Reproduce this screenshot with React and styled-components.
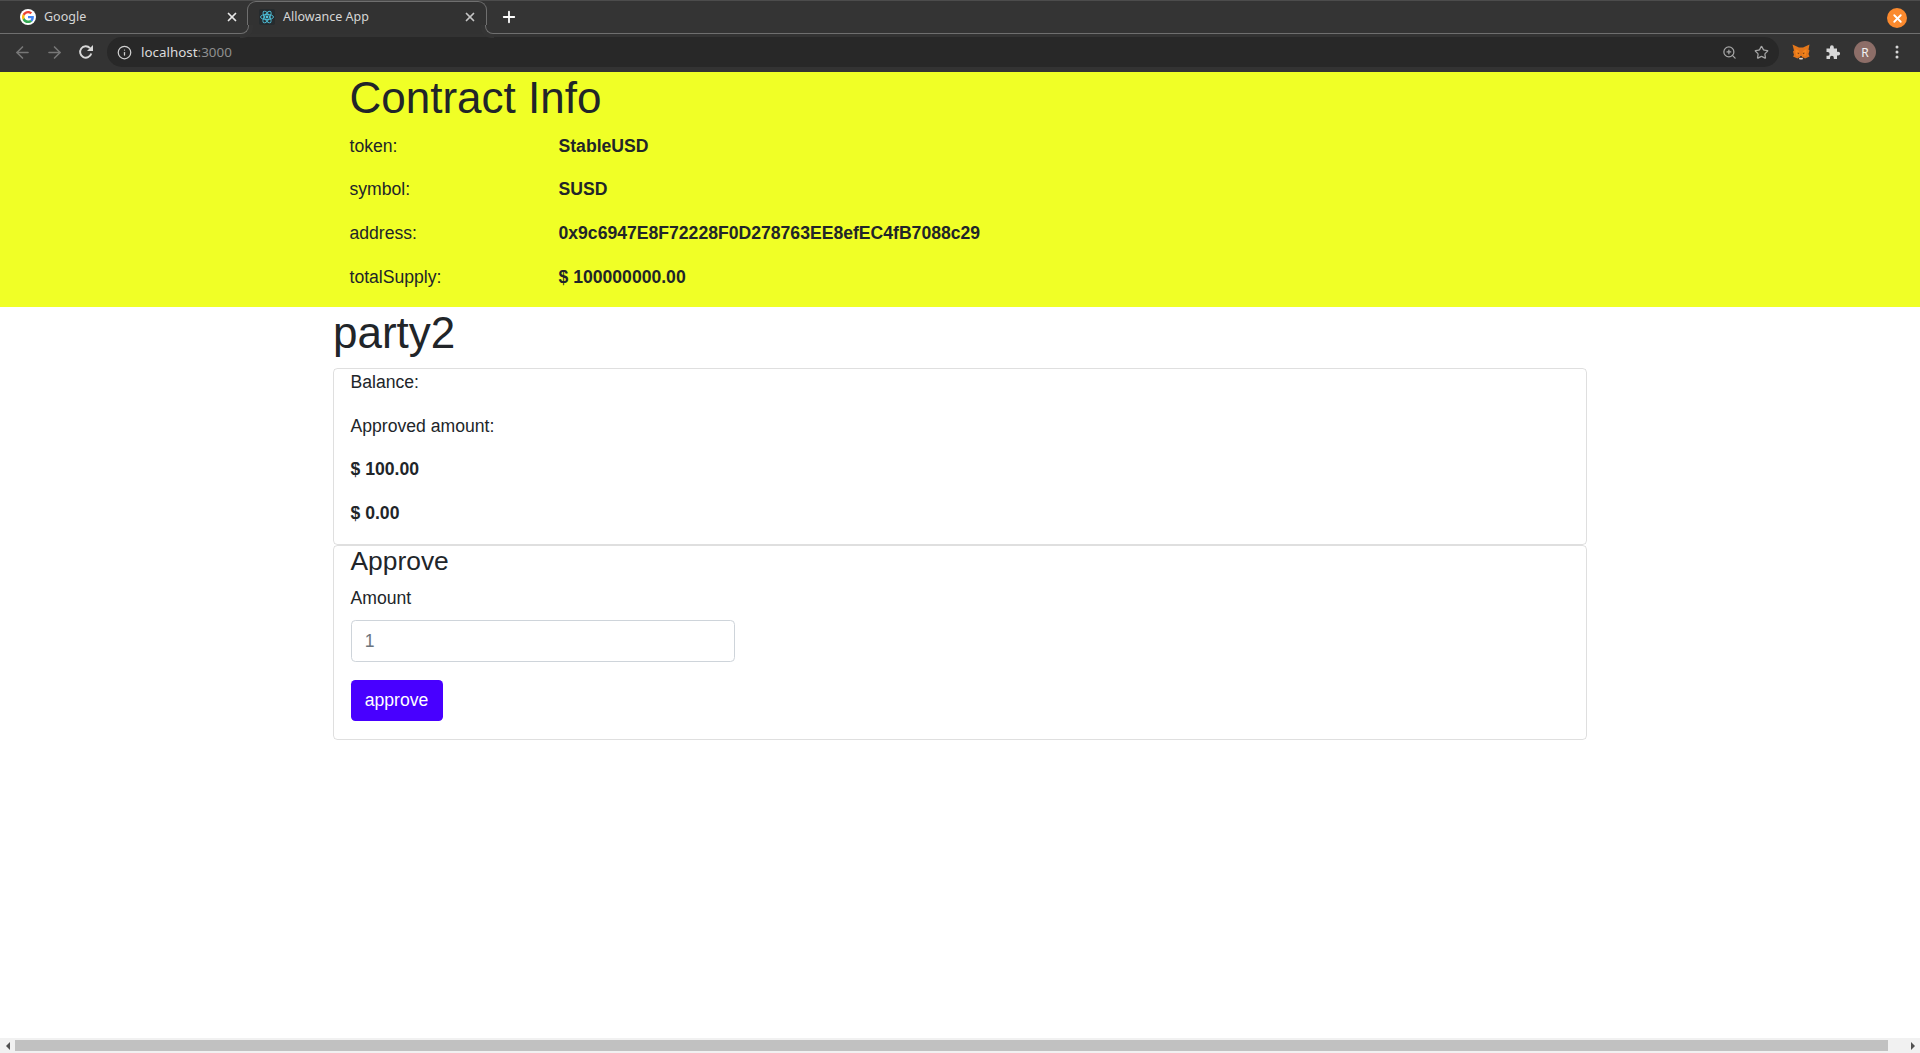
import React from "react";
import styled, { createGlobalStyle } from "styled-components";
import { ArrowLeft, ArrowRight, Info, Star, ZoomIn, X, Plus } from "lucide-react";

const GlobalStyle = createGlobalStyle`
  html, body {
    margin: 0;
    height: 100%;
    overflow: hidden;
    background: #fff;
  }
  * {
    box-sizing: border-box;
  }
`;

const Shell = styled.div`
  height: 100vh;
  display: flex;
  flex-direction: column;
  font-family: "Liberation Sans", Arial, sans-serif;
  color: #212529;
`;

/* browser chrome */
const TabStrip = styled.div`
  height: 34px;
  flex: none;
  display: flex;
  align-items: flex-end;
  background: #343434;
  border-top: 1px solid #4c4c4c;
  border-bottom: 1px solid #6f6f6f;
  font-family: "Noto Sans", sans-serif;
  font-size: 12.5px;
  color: #d6d6d6;
`;

const Tab = styled.div`
  position: relative;
  height: 32px;
  width: ${(p) => p.$width}px;
  padding: 0 ${(p) => p.$right}px 1px ${(p) => p.$left}px;
  display: flex;
  align-items: center;
  flex: none;
`;

const ActiveTab = styled(Tab)`
  margin-bottom: -1px;
  height: 33px;
  padding-bottom: 2px;
  background: #323232;
  border: 1px solid #6f6f6f;
  border-bottom: none;
  border-radius: 9px 9px 0 0;

  &::before,
  &::after {
    content: "";
    position: absolute;
    bottom: 0;
    width: 8px;
    height: 8px;
    border-bottom: 1px solid #6f6f6f;
  }
  &::before {
    left: -8px;
    border-right: 1px solid #6f6f6f;
    border-bottom-right-radius: 8px;
    background: #343434;
    box-shadow: 2px 2px 0 2px #343434;
  }
  &::after {
    right: -8px;
    border-left: 1px solid #6f6f6f;
    border-bottom-left-radius: 8px;
    background: #343434;
    box-shadow: -2px 2px 0 2px #343434;
  }
`;

const TabTitle = styled.span`
  margin: 0 0 1px 8px;
  flex: 1;
  white-space: nowrap;
`;

const TabClose = styled(X)`
  width: 14px;
  height: 14px;
  color: ${(p) => p.$color};
  stroke-width: 3;
  flex: none;
`;

const NewTab = styled.div`
  width: 24px;
  height: 32px;
  margin-left: 10px;
  padding-bottom: 1px;
  display: flex;
  align-items: center;
  justify-content: center;
  color: #fff;
`;

const WindowClose = styled.div`
  width: 20px;
  height: 20px;
  margin: 0 13px 5px auto;
  border-radius: 50%;
  background: #fb8a2e;
  color: #fff;
  display: flex;
  align-items: center;
  justify-content: center;
`;

const Toolbar = styled.div`
  height: 38px;
  flex: none;
  display: flex;
  align-items: center;
  padding: 0 12px 2px 10px;
  background: #333333;
  font-family: "Noto Sans", sans-serif;
`;

const NavButton = styled.div`
  width: 24px;
  height: 24px;
  margin-right: 8px;
  display: flex;
  align-items: center;
  justify-content: center;
  color: ${(p) => p.$color};
  flex: none;
`;

const Omnibox = styled.div`
  width: 1672px;
  height: 30px;
  margin: 0 10px 0 1px;
  padding: 0 8px 0 10px;
  display: flex;
  align-items: center;
  border-radius: 15px;
  background: #282828;
  flex: none;
`;

const Url = styled.span`
  margin-left: 9px;
  font-size: 13.4px;
  color: #dcdcdc;
  flex: 1;
`;

const UrlPort = styled.span`
  color: #8f8f8f;
`;

const OmniIcon = styled.div`
  width: 20px;
  height: 20px;
  margin-left: ${(p) => p.$gap || 0}px;
  color: #a6a6a6;
  display: flex;
  align-items: center;
  justify-content: center;
`;

const ExtIcon = styled.div`
  width: 24px;
  height: 24px;
  margin-right: 8px;
  display: flex;
  align-items: center;
  justify-content: center;
  flex: none;
`;

const Avatar = styled.div`
  width: 22px;
  height: 22px;
  border-radius: 50%;
  background: #8d6e68;
  color: #f2f2f2;
  font-size: 12px;
  display: flex;
  align-items: center;
  justify-content: center;
`;

/* page */
const Page = styled.div`
  flex: 1;
  min-height: 0;
  overflow: hidden;
  background: #fff;
`;

const Banner = styled.section`
  display: flow-root;
  height: 235px;
  background: #f0ff26;
`;

const Container = styled.div`
  width: 1254px;
  margin: 0 auto;
  padding: 0 ${(p) => p.$pad || 0}px;
`;

const Title = styled.h1`
  margin: 0 0 8.8px;
  font-size: 44px;
  font-weight: 400;
  line-height: 52px;
`;

const Row = styled.div`
  display: flex;
  margin-bottom: 17.6px;
  font-size: 17.6px;
  line-height: 26px;
  font-weight: ${(p) => (p.$bold ? 700 : 400)};
`;

const RowLabel = styled.div`
  width: 209px;
  flex: none;
`;

const RowValue = styled.div`
  font-weight: 700;
`;

const Card = styled.div`
  border: 1px solid rgba(0, 0, 0, 0.125);
  border-radius: 4.4px;
  padding: ${(p) => p.$top || 0}px 16.5px ${(p) => p.$bottom || 0}px;
`;

const CardHeading = styled.h4`
  margin: 0 0 6.8px;
  font-size: 26.4px;
  font-weight: 400;
  line-height: 31.7px;
`;

const FormGroup = styled.div`
  margin-bottom: 17.6px;
`;

const Label = styled.label`
  display: block;
  margin-bottom: 9.8px;
  font-size: 17.6px;
  line-height: 26px;
`;

const Input = styled.input`
  display: block;
  width: 384px;
  height: 42px;
  padding: 6.6px 13.2px;
  border: 1px solid #ced4da;
  border-radius: 4.4px;
  font-family: inherit;
  font-size: 17.6px;
  color: #495057;
  outline: none;

  &::placeholder {
    color: #6c757d;
  }
`;

const SubmitButton = styled.button`
  display: block;
  width: 92px;
  height: 41px;
  margin-bottom: 18px;
  padding: 0;
  border: none;
  border-radius: 4.4px;
  background: #4800ff;
  color: #fff;
  font-family: inherit;
  font-size: 17.6px;
`;

/* horizontal scrollbar */
const ScrollBar = styled.div`
  height: 15px;
  flex: none;
  display: flex;
  align-items: center;
  background: #f1f1f1;
`;

const ScrollArrow = styled.div`
  width: 15px;
  display: flex;
  justify-content: center;
  flex: none;

  &::before {
    content: "";
    border-style: solid;
    border-width: 4px ${(p) => (p.$right ? 0 : "4px")} 4px ${(p) => (p.$right ? "4px" : 0)};
    border-color: transparent #505050;
  }
`;

const ScrollThumb = styled.div`
  width: 1873px;
  height: 11px;
  background: #c1c1c1;
  flex: none;
`;

const ScrollRest = styled.div`
  flex: 1;
`;

function GoogleIcon() {
  return (
    <svg width="16" height="16" viewBox="0 0 48 48">
      <circle cx="24" cy="24" r="24" fill="#fff" />
      <path fill="#ea4335" d="M24 13c2.9 0 5.3 1 7.3 2.800l5.200-5.200C33.300 7.700 29 6 24 6 17 6 10.900 10 7.900 15.900l6.100 4.700C15.400 16.200 19.300 13 24 13z" />
      <path fill="#4285f4" d="M41.600 24.500c0-1.300-.1-2.500-.3-3.500H24v7h10c-.4 2.200-1.700 4.100-3.600 5.400l5.800 4.500c3.400-3.100 5.400-7.700 5.400-13.400z" />
      <path fill="#fbbc05" d="M14 27.400c-.4-1.100-.6-2.200-.6-3.400s.2-2.300.6-3.400l-6.100-4.700C6.700 18.300 6 21.100 6 24s.7 5.700 1.900 8.100l6.100-4.700z" />
      <path fill="#34a853" d="M24 42c4.900 0 9-1.600 12.200-4.600l-5.800-4.500c-1.700 1.100-3.800 1.800-6.400 1.800-4.700 0-8.600-3.200-10-7.500l-6.100 4.700C10.900 38 17 42 24 42z" />
    </svg>
  );
}

function ReactIcon() {
  return (
    <svg width="16" height="16" viewBox="0 0 32 32">
      <rect width="32" height="32" rx="4" fill="#262b2e" />
      <g fill="none" stroke="#4fc3dc" strokeWidth="1.8">
        <ellipse cx="16" cy="16" rx="13" ry="5.200" />
        <ellipse cx="16" cy="16" rx="13" ry="5.200" transform="rotate(60 16 16)" />
        <ellipse cx="16" cy="16" rx="13" ry="5.200" transform="rotate(120 16 16)" />
      </g>
      <circle cx="16" cy="16" r="2.800" fill="#4fc3dc" />
    </svg>
  );
}

function ReloadIcon() {
  return (
    <svg width="16" height="16" viewBox="0 0 16 16">
      <path fill="none" stroke="#d8d8d8" strokeWidth="1.900" d="M13.300 9.500A5.700 5.700 0 1 1 12 4.100" />
      <path fill="#d8d8d8" d="M15 1v6H9z" />
    </svg>
  );
}

function FoxIcon() {
  return (
    <svg width="18" height="18" viewBox="0 0 18 18">
      <path fill="#e2761b" d="M.5 1.500L7 4.500h4l6.500-3-1 5 1 1-1 3.500 1 2.500-4.500 2-1.500-1H7l-1.500 1-4.500-2L2 12 1 8.500l1-1z" />
      <path fill="#f6851b" d="M3.500 6L7 8l1 4-3.500 1-1-3.500zM14.500 6L11 8l-1 4 3.500 1 1-3.500z" />
      <path fill="#763d16" d="M5.500 9.500L7.500 10l-1.500 1.500zM12.500 9.500L10.500 10l1.500 1.500z" />
      <path fill="#e4d4c6" d="M7 15h4l-.5 1.500h-3z" />
      <path fill="#233447" d="M8 13h2l-.5 1.500h-1z" />
    </svg>
  );
}

function PuzzleIcon() {
  return (
    <svg width="16" height="16" viewBox="0 0 16 16">
      <path fill="#d8d8d8" d="M1.500 4.500H5V3.200a1.900 1.900 0 0 1 3.800 0v1.300h3.200v3.200h1.200a1.900 1.900 0 0 1 0 3.800H12V15H8.800v-1.300a1.900 1.900 0 0 0-3.800 0V15H1.500v-3.200h1.200a1.900 1.900 0 0 0 0-3.800H1.500z" />
    </svg>
  );
}

function DotsIcon() {
  return (
    <svg width="16" height="16" viewBox="0 0 16 16" fill="#d8d8d8">
      <circle cx="8" cy="3" r="1.500" />
      <circle cx="8" cy="8" r="1.500" />
      <circle cx="8" cy="13" r="1.500" />
    </svg>
  );
}

const contractRows = [
  ["token:", "StableUSD"],
  ["symbol:", "SUSD"],
  ["address:", "0x9c6947E8F72228F0D278763EE8efEC4fB7088c29"],
  ["totalSupply:", "$ 100000000.00"],
];

function BrowserBar() {
  return (
    <>
      <TabStrip>
        <Tab $width={247} $left={20} $right={8}>
          <GoogleIcon />
          <TabTitle>Google</TabTitle>
          <TabClose $color="#e8e8e8" />
        </Tab>
        <ActiveTab $width={240} $left={11} $right={9}>
          <ReactIcon />
          <TabTitle>Allowance App</TabTitle>
          <TabClose $color="#c4c4c4" />
        </ActiveTab>
        <NewTab>
          <Plus size={18} strokeWidth={2.4} />
        </NewTab>
        <WindowClose>
          <X size={13} strokeWidth={3.4} />
        </WindowClose>
      </TabStrip>
      <Toolbar>
        <NavButton $color="#777">
          <ArrowLeft size={19} />
        </NavButton>
        <NavButton $color="#777">
          <ArrowRight size={19} />
        </NavButton>
        <NavButton $color="#d8d8d8">
          <ReloadIcon />
        </NavButton>
        <Omnibox>
          <Info size={15} color="#d0d0d0" />
          <Url>
            localhost<UrlPort>:3000</UrlPort>
          </Url>
          <OmniIcon>
            <ZoomIn size={15} />
          </OmniIcon>
          <OmniIcon $gap={12}>
            <Star size={15} />
          </OmniIcon>
        </Omnibox>
        <ExtIcon>
          <FoxIcon />
        </ExtIcon>
        <ExtIcon>
          <PuzzleIcon />
        </ExtIcon>
        <ExtIcon>
          <Avatar>R</Avatar>
        </ExtIcon>
        <ExtIcon>
          <DotsIcon />
        </ExtIcon>
      </Toolbar>
    </>
  );
}

export default function App() {
  return (
    <Shell>
      <GlobalStyle />
      <BrowserBar />
      <Page>
        <Banner>
          <Container $pad={16.5}>
            <Title>Contract Info</Title>
            {contractRows.map(([label, value]) => (
              <Row key={label}>
                <RowLabel>{label}</RowLabel>
                <RowValue>{value}</RowValue>
              </Row>
            ))}
          </Container>
        </Banner>
        <Container>
          <Title>party2</Title>
          <Card $top={0.3} $bottom={0.7}>
            <Row>Balance:</Row>
            <Row>Approved amount:</Row>
            <Row $bold>$ 100.00</Row>
            <Row $bold>$ 0.00</Row>
          </Card>
          <Card>
            <CardHeading>Approve</CardHeading>
            <FormGroup>
              <Label>Amount</Label>
              <Input type="number" placeholder="1" />
            </FormGroup>
            <SubmitButton>approve</SubmitButton>
          </Card>
        </Container>
      </Page>
      <ScrollBar>
        <ScrollArrow />
        <ScrollThumb />
        <ScrollRest />
        <ScrollArrow $right />
      </ScrollBar>
    </Shell>
  );
}
